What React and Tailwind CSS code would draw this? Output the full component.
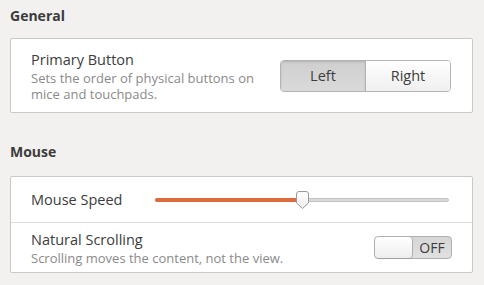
import React from 'react';

const FONT = "font-['Open_Sans','DejaVu_Sans',sans-serif]";

function Segmented() {
  return (
    <div className="flex h-[32px] w-[171px] rounded-[4px] border border-[#b4b4b4] overflow-hidden text-[14.5px] text-[#3c3c3c]">
      <div className="flex-1 flex items-center justify-center bg-gradient-to-b from-[#cfcfcf] to-[#dadada] shadow-[inset_0_1px_2px_rgba(0,0,0,0.15)] border-r border-[#b4b4b4]">
        Left
      </div>
      <div className="flex-1 flex items-center justify-center bg-gradient-to-b from-[#ffffff] to-[#efefef]">
        Right
      </div>
    </div>
  );
}

function Slider({ value = 0.5 }) {
  return (
    <div className="relative h-[18px] w-[294px]">
      <div className="absolute left-0 right-0 top-[7px] h-[4px] rounded-full bg-[#dadada] border border-[#c2c2c2]" />
      <div
        className="absolute left-0 top-[7px] h-[4px] rounded-l-full bg-[#dd6b3e]"
        style={{ width: `${value * 100}%` }}
      />
      <svg
        className="absolute top-0"
        style={{ left: `calc(${value * 100}% - 6px)` }}
        width="13"
        height="18"
        viewBox="0 0 13 18"
      >
        <defs>
          <linearGradient id="knob" x1="0" y1="0" x2="0" y2="1">
            <stop offset="0" stopColor="#ffffff" />
            <stop offset="1" stopColor="#ececec" />
          </linearGradient>
        </defs>
        <path
          d="M3 0.5 H10 Q12.5 0.5 12.5 3 V12 L6.5 17.5 L0.5 12 V3 Q0.5 0.5 3 0.5 Z"
          fill="url(#knob)"
          stroke="#9a9a9a"
          strokeWidth="1"
        />
      </svg>
    </div>
  );
}

function Switch() {
  return (
    <div className="relative flex h-[23px] w-[78px] rounded-[4px] border border-[#b0b0b0] bg-gradient-to-b from-[#d6d6d6] to-[#e0e0e0]">
      <div className="w-[38px] h-full rounded-[4px] border-r border-[#b0b0b0] bg-gradient-to-b from-[#ffffff] to-[#eeeeee] shadow-[0_1px_1px_rgba(0,0,0,0.1)]" />
      <div className="flex-1 flex items-center justify-center text-[14px] text-[#3c3c3c]">OFF</div>
    </div>
  );
}

export default function App() {
  return (
    <div className={`${FONT} w-[484px] h-[285px] bg-[#f2f1f0] text-[#3c3c3c] pl-[10px] pt-[7px] overflow-hidden`}>
      <h2 className="text-[14px] font-bold leading-[18px] h-[31px]">General</h2>
      <div className="w-[463px] h-[75px] bg-white border border-[#c9c9c9] rounded-[2px] flex items-center justify-between pl-[20px] pr-[21px]">
        <div>
          <div className="text-[14.5px] leading-[20px]">Primary Button</div>
          <div className="text-[13px] leading-[16px] text-[#8a8a8a] w-[240px]">
            Sets the order of physical buttons on mice and touchpads.
          </div>
        </div>
        <Segmented />
      </div>

      <h2 className="text-[14px] font-bold leading-[18px] mt-[30px] h-[33px]">Mouse</h2>
      <div className="w-[463px] bg-white border border-[#c9c9c9] rounded-[2px]">
        <div className="h-[46px] flex items-center justify-between pl-[20px] pr-[23px] border-b border-[#dcdcdc]">
          <div className="text-[14.5px]">Mouse Speed</div>
          <Slider value={0.5} />
        </div>
        <div className="h-[49px] flex items-center justify-between pl-[20px] pr-[20px]">
          <div>
            <div className="text-[14.5px] leading-[20px]">Natural Scrolling</div>
            <div className="text-[13px] leading-[16px] text-[#8a8a8a]">
              Scrolling moves the content, not the view.
            </div>
          </div>
          <Switch />
        </div>
      </div>
    </div>
  );
}
